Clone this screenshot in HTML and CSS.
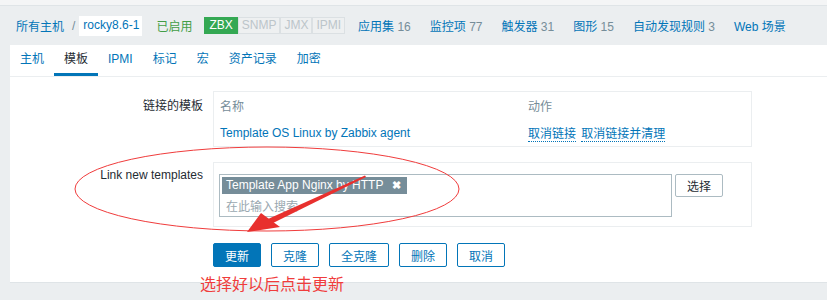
FILE: index.html
```html
<!DOCTYPE html>
<html lang="zh-CN">
<head>
    <meta charset="UTF-8">
    <title>rocky8.6-1 - 模板</title>
    <link rel="stylesheet" href="styles.css">
</head>
<body>
    <div class="topline"></div>

    <div class="header">
        <a class="crumb" href="#">所有主机</a>
        <span class="sep">/</span>
        <span class="host">rocky8.6-1</span>
        <span class="status">已启用</span>
        <span class="badges">
            <span class="badge on">ZBX</span><span class="badge">SNMP</span><span class="badge">JMX</span><span class="badge">IPMI</span>
        </span>
        <a class="nav" href="#">应用集 <span class="num">16</span></a>
        <a class="nav" href="#">监控项 <span class="num">77</span></a>
        <a class="nav" href="#">触发器 <span class="num">31</span></a>
        <a class="nav" href="#">图形 <span class="num">15</span></a>
        <a class="nav" href="#">自动发现规则 <span class="num">3</span></a>
        <a class="nav" href="#">Web 场景</a>
    </div>

    <div class="panel">
        <div class="tabs">
            <a class="tab" href="#">主机</a>
            <a class="tab active" href="#">模板</a>
            <a class="tab" href="#">IPMI</a>
            <a class="tab" href="#">标记</a>
            <a class="tab" href="#">宏</a>
            <a class="tab" href="#">资产记录</a>
            <a class="tab" href="#">加密</a>
        </div>

        <div class="form">
            <div class="form-row">
                <label class="form-label first">链接的模板</label>
                <div class="box linked">
                    <table class="list">
                        <tr>
                            <th class="col-name">名称</th>
                            <th>动作</th>
                        </tr>
                        <tr>
                            <td><a href="#">Template OS Linux by Zabbix agent</a></td>
                            <td>
                                <a class="dotted" href="#">取消链接</a>
                                <a class="dotted" href="#">取消链接并清理</a>
                            </td>
                        </tr>
                    </table>
                </div>
            </div>

            <div class="form-row">
                <label class="form-label second">Link new templates</label>
                <div class="box newlink">
                    <div class="multiselect">
                        <span class="tag">Template App Nginx by HTTP <span class="tag-x">&#10006;</span></span>
                        <div class="placeholder">在此输入搜索</div>
                    </div>
                    <button class="btn-grey">选择</button>
                </div>
            </div>

            <div class="buttons">
                <button class="btn primary">更新</button>
                <button class="btn">克隆</button>
                <button class="btn wide">全克隆</button>
                <button class="btn">删除</button>
                <button class="btn">取消</button>
            </div>
        </div>
    </div>

    <!-- screenshot annotation drawn over the page -->
    <svg class="markup" width="827" height="300" viewBox="0 0 827 300">
        <ellipse cx="267" cy="189" rx="192" ry="42" fill="none" stroke="#f03c3c" stroke-width="1"/>
        <polygon points="365,175.5 366,177 271,224 268,219" fill="#e8302e"/>
        <polygon points="247,232 261,213 280,227" fill="#e8302e"/>
    </svg>
    <div class="note">选择好以后点击更新</div>
</body>
</html>
```

FILE: styles.css
```css
body {
    margin: 0;
    background-color: #ebeef0;
    color: #1f2c33;
    font-family: "Liberation Sans", Arial, "Noto Sans CJK SC", sans-serif;
    font-size: 12px;
    position: relative;
    height: 300px;
    overflow: hidden;
}
a {
    color: #0275b8;
    text-decoration: none;
}
.topline {
    height: 5px;
    background-color: #f4f5f6;
    border-bottom: 1px solid #dfe4e7;
}
.header {
    display: flex;
    align-items: center;
    height: 39px;
    padding-left: 16px;
    white-space: nowrap;
}
.crumb {
    color: #0275b8;
}
.sep {
    color: #768d99;
    margin: 0 4px 0 8px;
}
.host {
    background-color: #fff;
    color: #0275b8;
    padding: 3px 3px 4px 4px;
    line-height: 13px;
}
.status {
    color: #429e47;
    margin-left: 14px;
}
.badges {
    display: flex;
    margin-left: 12px;
    margin-right: 13px;
}
.badge {
    border: 1px solid #dbe0e3;
    background-color: #eef0f1;
    color: #bcc5ca;
    padding: 0 3px;
    line-height: 15px;
    font-size: 12px;
}
.badge.on {
    background-color: #34a853;
    border-color: #34a853;
    color: #fff;
    padding: 0 4px;
}
.nav {
    margin-right: 19px;
}
.num {
    color: #768d99;
}
.panel {
    margin-left: 10px;
    background-color: #fff;
    border-bottom: 1px solid #dfe4e7;
    height: 237px;
}
.tabs {
    display: flex;
    height: 31px;
    border-bottom: 1px solid #ebeef0;
}
.tab {
    display: block;
    padding: 0 10px;
    line-height: 29px;
    height: 28px;
    border-bottom: 3px solid transparent;
}
.tab.active {
    color: #1f2c33;
    border-bottom-color: #0275b8;
}
.form {
    padding-top: 14px;
}
.form-row {
    display: flex;
    margin-bottom: 15px;
}
.form-label {
    text-align: right;
    padding-right: 10px;
    box-sizing: border-box;
    width: 203px;
}
.form-label.first {
    padding-top: 5px;
}
.form-label.second {
    padding-top: 6px;
}
.box {
    border: 1px solid #ebeef0;
    box-sizing: border-box;
    width: 539px;
}
.linked {
    height: 56px;
}
.list {
    border-collapse: collapse;
    margin-left: 3px;
}
.list th {
    color: #768d99;
    font-weight: normal;
    text-align: left;
    padding: 5px 3px 0 3px;
    height: 14px;
}
.list td {
    padding: 10px 3px 0 3px;
}
.col-name {
    width: 302px;
}
.dotted {
    border-bottom: 1px dotted #0275b8;
    margin-right: 2px;
}
.newlink {
    display: flex;
    align-items: flex-start;
    height: 65px;
    padding: 11px 0 0 5px;
}
.multiselect {
    width: 453px;
    height: 43px;
    box-sizing: border-box;
    border: 1px solid #acbbc2;
    padding: 2px 2px;
}
.tag {
    display: inline-block;
    background-color: #768d99;
    color: #fff;
    padding: 0 6px 0 4px;
    line-height: 17px;
}
.tag-x {
    font-size: 11px;
    font-weight: bold;
    margin-left: 5px;
}
.placeholder {
    color: #9aa8b0;
    padding: 3px 0 0 4px;
}
.btn-grey {
    margin-left: 3px;
    width: 48px;
    height: 23px;
    background-color: #fff;
    border: 1px solid #acbbc2;
    border-radius: 2px;
    color: #1f2c33;
    font-family: inherit;
    font-size: 12px;
}
.buttons {
    display: flex;
    gap: 10px;
    padding-left: 203px;
    margin-top: 16px;
}
.btn {
    width: 48px;
    height: 24px;
    background-color: #fff;
    border: 1px solid #0275b8;
    border-radius: 2px;
    color: #0275b8;
    font-family: inherit;
    font-size: 12px;
    padding: 0;
}
.btn.wide {
    width: 60px;
}
.btn.primary {
    background-color: #0275b8;
    color: #fff;
}
.markup {
    position: absolute;
    left: 0;
    top: 0;
    pointer-events: none;
}
.note {
    position: absolute;
    left: 200px;
    top: 273px;
    color: #f03c3c;
    font-size: 16px;
    line-height: 20px;
    font-family: "Noto Sans CJK SC", sans-serif;
}
```
